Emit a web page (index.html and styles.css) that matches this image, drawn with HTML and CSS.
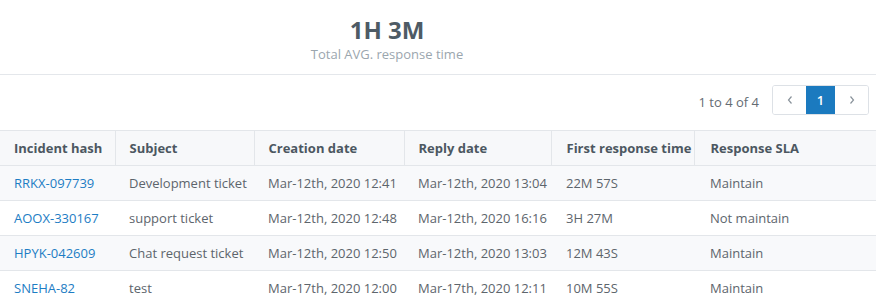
FILE: index.html
```html
<!DOCTYPE html>
<html>
<head>
<meta charset="utf-8">
<link rel="stylesheet" href="styles.css">
</head>
<body>
<div class="stat">
  <div class="stat-value">1H 3M</div>
  <div class="stat-label">Total AVG. response time</div>
</div>
<div class="toolbar">
  <span class="count">1 to 4 of 4</span>
  <div class="pager">
    <button class="pg-btn" aria-label="Previous">
      <svg width="8" height="10" viewBox="0 0 8 10"><path d="M5.5 1.5 L2.5 5 L5.5 8.5" fill="none" stroke="#8a939b" stroke-width="1.2"/></svg>
    </button>
    <button class="pg-btn active">1</button>
    <button class="pg-btn" aria-label="Next">
      <svg width="8" height="10" viewBox="0 0 8 10"><path d="M2.5 1.5 L5.5 5 L2.5 8.5" fill="none" stroke="#8a939b" stroke-width="1.2"/></svg>
    </button>
  </div>
</div>
<table class="grid">
  <colgroup>
    <col class="c1"><col class="c2"><col class="c3"><col class="c4"><col class="c5"><col class="c6">
  </colgroup>
  <thead>
    <tr>
      <th>Incident hash</th>
      <th>Subject</th>
      <th>Creation date</th>
      <th>Reply date</th>
      <th class="p5">First response time</th>
      <th class="p6">Response SLA</th>
    </tr>
  </thead>
  <tbody>
    <tr>
      <td><a href="#">RRKX-097739</a></td>
      <td>Development ticket</td>
      <td>Mar-12th, 2020 12:41</td>
      <td>Mar-12th, 2020 13:04</td>
      <td class="p5">22M 57S</td>
      <td class="p6">Maintain</td>
    </tr>
    <tr>
      <td><a href="#">AOOX-330167</a></td>
      <td>support ticket</td>
      <td>Mar-12th, 2020 12:48</td>
      <td>Mar-12th, 2020 16:16</td>
      <td class="p5">3H 27M</td>
      <td class="p6">Not maintain</td>
    </tr>
    <tr>
      <td><a href="#">HPYK-042609</a></td>
      <td>Chat request ticket</td>
      <td>Mar-12th, 2020 12:50</td>
      <td>Mar-12th, 2020 13:03</td>
      <td class="p5">12M 43S</td>
      <td class="p6">Maintain</td>
    </tr>
    <tr>
      <td><a href="#">SNEHA-82</a></td>
      <td>test</td>
      <td>Mar-17th, 2020 12:00</td>
      <td>Mar-17th, 2020 12:11</td>
      <td class="p5">10M 55S</td>
      <td class="p6">Maintain</td>
    </tr>
  </tbody>
</table>
</body>
</html>
```
FILE: styles.css
```css
html, body {
  margin: 0;
  padding: 0;
  background: #ffffff;
}
body {
  font-family: "Open Sans", "Liberation Sans", sans-serif;
  font-size: 13px;
  color: #5d656c;
  width: 876px;
  overflow: hidden;
}
.stat {
  height: 74px;
  border-bottom: 1px solid #e4e7eb;
  padding-right: 102px;
  text-align: center;
  box-sizing: content-box;
}
.stat-value {
  padding-top: 16px;
  font-size: 24px;
  line-height: 28px;
  font-weight: 700;
  color: #4e5b65;
}
.stat-label {
  margin-top: 1px;
  font-size: 13px;
  line-height: 18px;
  color: #9ba6ae;
}
.toolbar {
  display: flex;
  justify-content: flex-end;
  align-items: center;
  gap: 13px;
  padding: 10px 7px 15px 0;
}
.count {
  color: #646c73;
  font-size: 13px;
  line-height: 18px;
  padding-top: 3px;
}
.pager {
  display: flex;
  border: 1px solid #dde1e6;
  border-radius: 3px;
  height: 28px;
  overflow: hidden;
}
.pg-btn {
  width: 33px;
  height: 28px;
  border: 0;
  margin: 0;
  padding: 0;
  background: #ffffff;
  display: flex;
  align-items: center;
  justify-content: center;
  font-family: "Open Sans", "Liberation Sans", sans-serif;
  font-size: 13px;
  cursor: pointer;
}
.pg-btn.active {
  width: 29px;
  background: #1b7abf;
  color: #ffffff;
  font-weight: 600;
}
.grid {
  width: 876px;
  border-collapse: collapse;
  table-layout: fixed;
}
.c1 { width: 115px; }
.c2 { width: 139px; }
.c3 { width: 150px; }
.c4 { width: 147px; }
.c5 { width: 143px; }
.c6 { width: 182px; }
.grid th {
  background: #f7f8fa;
  border-top: 1px solid #e3e6ea;
  border-bottom: 1px solid #e3e6ea;
  border-right: 1px solid #e3e6ea;
  height: 34px;
  padding: 0 0 0 14px;
  text-align: left;
  font-weight: 700;
  color: #4c5761;
  white-space: nowrap;
  overflow: hidden;
}
.grid th:last-child {
  border-right: 0;
}
.grid td {
  height: 34px;
  padding: 0 0 0 14px;
  border-bottom: 1px solid #e3e6ea;
  white-space: nowrap;
  overflow: hidden;
}
.grid .p5 {
  padding-left: 15px;
}
.grid .p6 {
  padding-left: 16px;
}
.grid tbody tr:nth-child(odd) td {
  background: #f8f9fb;
}
.grid tbody tr:last-child td {
  border-bottom: 0;
}
.grid a {
  color: #1d7dc4;
  text-decoration: none;
}
```
